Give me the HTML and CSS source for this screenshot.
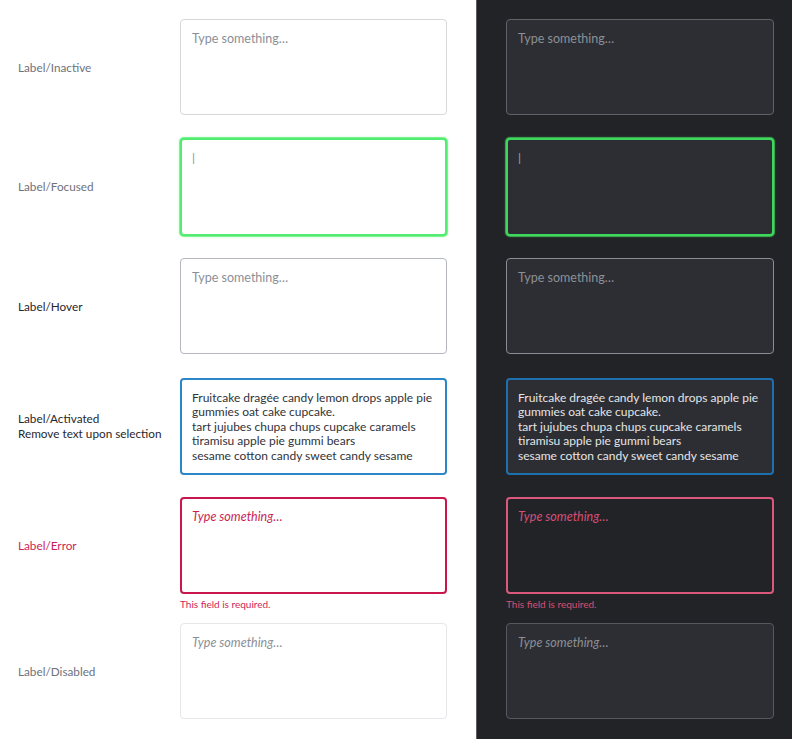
FILE: index.html
```html
<!DOCTYPE html>
<html lang="en">
<head>
<meta charset="utf-8">
<title>Textarea states</title>
<link rel="stylesheet" href="styles.css">
</head>
<body>
<div class="page">
  <section class="panel panel-light">
    <div class="row">
      <div class="label label-muted">Label/Inactive</div>
      <div class="field"><div class="box box-inactive"><span class="ph">Type something…</span></div></div>
    </div>
    <div class="row">
      <div class="label label-muted">Label/Focused</div>
      <div class="field"><div class="box box-focused"><span class="caret">|</span></div></div>
    </div>
    <div class="row">
      <div class="label label-dark">Label/Hover</div>
      <div class="field"><div class="box box-hover"><span class="ph">Type something…</span></div></div>
    </div>
    <div class="row">
      <div class="label label-dark">Label/Activated<br>Remove text upon selection</div>
      <div class="field"><div class="box box-active"><span class="value">Fruitcake dragée candy lemon drops apple pie<br>gummies oat cake cupcake.<br>tart jujubes chupa chups cupcake caramels<br>tiramisu apple pie gummi bears<br>sesame cotton candy sweet candy sesame</span></div></div>
    </div>
    <div class="row row-error">
      <div class="label label-error">Label/Error</div>
      <div class="field">
        <div class="box box-error"><span class="ph ph-error">Type something…</span></div>
        <div class="msg">This field is required.</div>
      </div>
    </div>
    <div class="row">
      <div class="label label-muted">Label/Disabled</div>
      <div class="field"><div class="box box-disabled"><span class="ph ph-italic">Type something…</span></div></div>
    </div>
  </section>
  <section class="panel panel-dark">
    <div class="row">
      <div class="field"><div class="box box-inactive"><span class="ph">Type something…</span></div></div>
    </div>
    <div class="row">
      <div class="field"><div class="box box-focused"><span class="caret">|</span></div></div>
    </div>
    <div class="row">
      <div class="field"><div class="box box-hover"><span class="ph">Type something…</span></div></div>
    </div>
    <div class="row">
      <div class="field"><div class="box box-active"><span class="value">Fruitcake dragée candy lemon drops apple pie<br>gummies oat cake cupcake.<br>tart jujubes chupa chups cupcake caramels<br>tiramisu apple pie gummi bears<br>sesame cotton candy sweet candy sesame</span></div></div>
    </div>
    <div class="row row-error">
      <div class="field">
        <div class="box box-error"><span class="ph ph-error">Type something…</span></div>
        <div class="msg">This field is required.</div>
      </div>
    </div>
    <div class="row">
      <div class="field"><div class="box box-disabled"><span class="ph ph-italic">Type something…</span></div></div>
    </div>
  </section>
</div>
</body>
</html>
```
FILE: styles.css
```css
* { box-sizing: border-box; }
html, body { margin: 0; padding: 0; height: 100%; }
body {
  font-family: Lato, "Open Sans", "Liberation Sans", sans-serif;
  background: #ffffff;
}
.page {
  display: flex;
  height: 739px;
  width: 792px;
}
.panel {
  display: flex;
  flex-direction: column;
  padding-top: 19px;
}
.panel-light {
  width: 476px;
  padding-left: 18px;
  background: #ffffff;
}
.panel-dark {
  flex: 1;
  padding-left: 29px;
  padding-right: 18px;
  background: #222327;
  border-left: 1px solid #5e5f63;
}
.row {
  display: flex;
  align-items: flex-start;
}
.row + .row { margin-top: 23.5px; }
.row-error + .row { margin-top: 13px; }
.label {
  width: 162px;
  height: 96px;
  display: flex;
  align-items: center;
  font-size: 11.75px;
  line-height: 15px;
}
.label-muted { color: #6e727c; }
.label-dark { color: #26282d; }
.label-error { color: #cc1f55; }
.field { width: 267px; }
.panel-dark .field { width: 268px; }
.box {
  height: 96px;
  border: 1px solid #d6d8dc;
  border-radius: 4px;
  padding: 12px 11px 10px;
  font-size: 12px;
  line-height: 14.5px;
  background: #ffffff;
}
.ph { color: #8b8f98; font-size: 12.5px; }
.ph-italic { font-style: italic; }
.ph-error { font-style: italic; color: #cc1f55; }
.caret { color: #8b8f98; font-size: 12px; }
.value { color: #30333a; }
.box-hover { border-color: #b4b7bd; }
.box-focused {
  border: 2px solid #52ec70;
  box-shadow: 0 0 0 1px rgba(90, 240, 115, 0.7), 0 0 2px 1px rgba(90, 240, 115, 0.4);
  padding: 11px 10px 9px;
  height: 98px;
  margin: -1px 0;
}
.box-active {
  border: 2px solid #2d86c8;
  padding: 11px 10px 9px;
  height: 97px;
  margin-bottom: -1px;
}
.box-error {
  border: 2px solid #c9164c;
  padding: 11px 10px 9px;
  height: 97px;
}
.box-disabled { border-color: #e6e7ea; }
.msg {
  margin-top: 4px;
  font-size: 10px;
  line-height: 12px;
  color: #cc1f55;
}

/* dark theme */
.panel-dark .box {
  background: #2c2e33;
  border-color: #5f6268;
}
.panel-dark .ph { color: #8c9096; }
.panel-dark .caret { color: #a4a7ad; }
.panel-dark .value { color: #e4e5e7; }
.panel-dark .box-hover { border-color: #8a8d93; }
.panel-dark .box-focused {
  border-color: #3ed85c;
  box-shadow: 0 0 0 1px rgba(70, 220, 95, 0.6), 0 0 2px 1px rgba(70, 220, 95, 0.35);
}
.panel-dark .box-active { border-color: #1d6fae; }
.panel-dark .box-error {
  background: #222327;
  border-color: #d9587c;
}
.panel-dark .ph-error { color: #d64f76; }
.panel-dark .msg { color: #d64f76; }
.panel-dark .box-disabled { border-color: #55585e; }
```
